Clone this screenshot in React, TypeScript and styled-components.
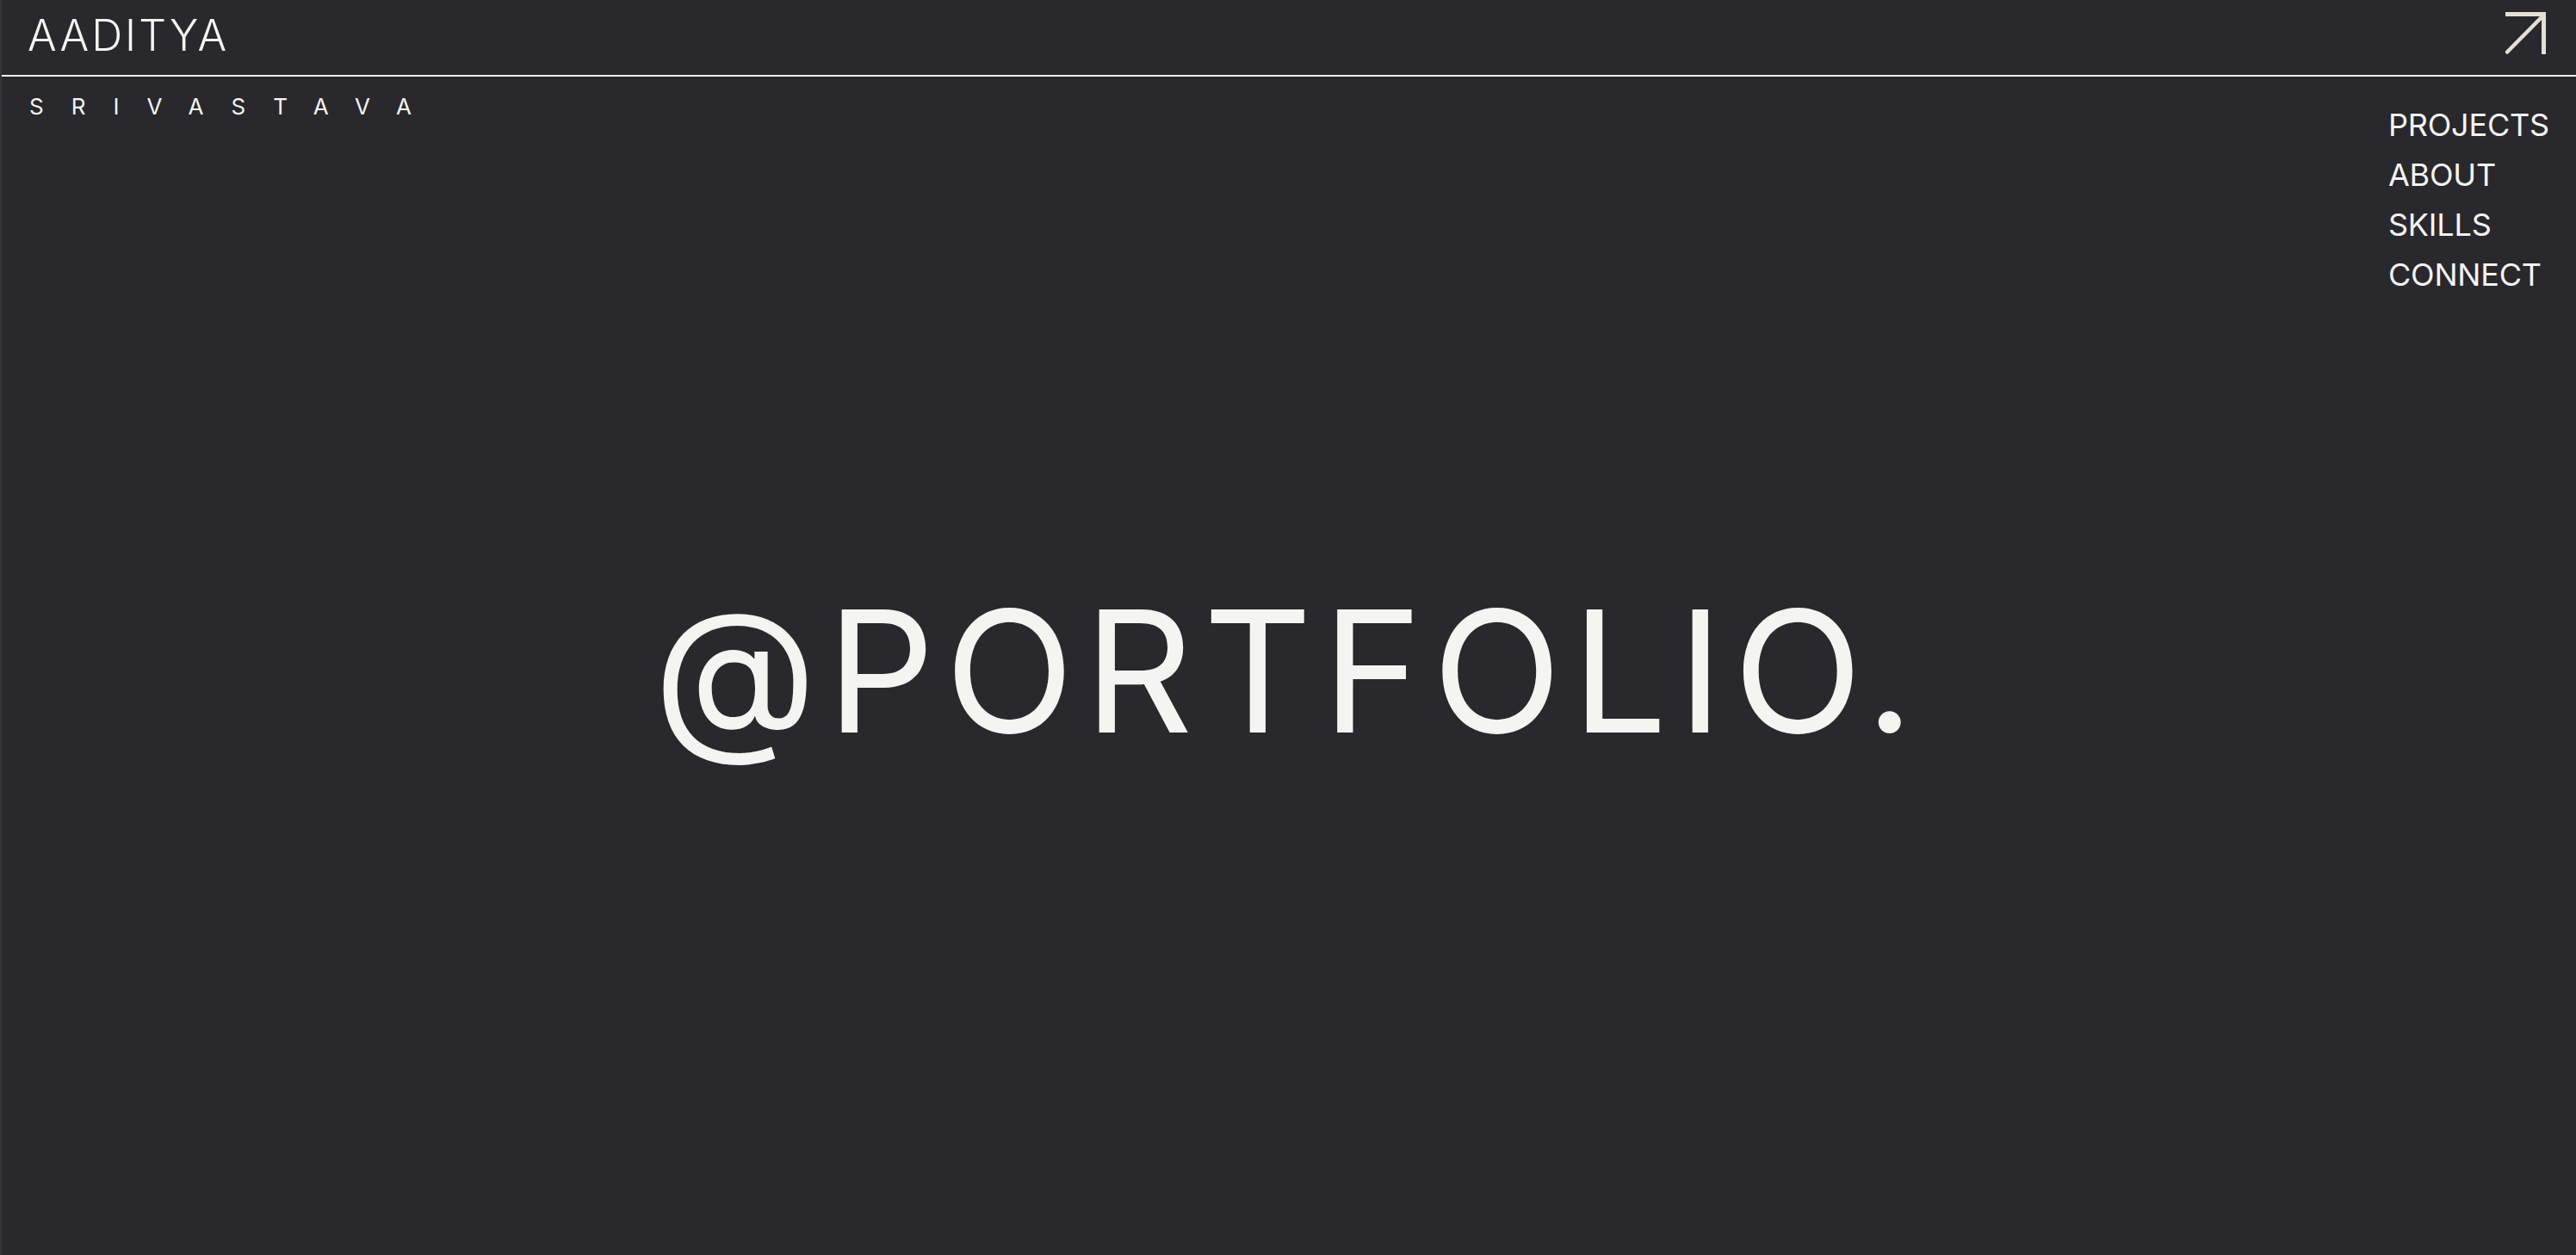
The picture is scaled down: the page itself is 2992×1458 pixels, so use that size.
import React from "react";
import styled, { createGlobalStyle } from "styled-components";

const Global = createGlobalStyle`
  html, body {
    margin: 0;
    padding: 0;
    background: #29282d;
  }
  body {
    font-family: Inter, "Noto Sans", "Liberation Sans", sans-serif;
    color: #f4f4f1;
  }
`;

const Page = styled.div`
  height: 1458px;
  display: grid;
  grid-template-rows: auto 1fr;
  background: #29282d;
  border-left: 2px solid #35343a;
  box-sizing: border-box;
  overflow: hidden;
`;

const Header = styled.header`
  height: 87px;
  display: flex;
  align-items: flex-start;
  justify-content: space-between;
  padding: 0 34px 0 30px;
  border-bottom: 2px solid #f4f4f4;
`;

const Logo = styled.div`
  margin-top: 11px;
  font-size: 50px;
  font-weight: 300;
  letter-spacing: 3px;
  line-height: normal;
  color: #f4f4f1;
`;

const ArrowLink = styled.a`
  margin-top: 13px;
  display: block;
  width: 48px;
  height: 50px;
  color: #e5e0d4;
`;

const Main = styled.main`
  display: grid;
  grid-template: 1fr / 1fr;
  & > * {
    grid-area: 1 / 1;
  }
`;

const Subtitle = styled.div`
  align-self: start;
  justify-self: start;
  margin: 19px 0 0 32px;
  font-size: 26px;
  font-weight: 400;
  letter-spacing: 32px;
  line-height: normal;
`;

const Nav = styled.nav`
  align-self: start;
  justify-self: end;
  margin: 27px 31px 0 0;
  display: flex;
  flex-direction: column;
  align-items: flex-start;
  z-index: 1;
`;

const NavLink = styled.a`
  font-size: 36px;
  line-height: 58px;
  font-weight: 400;
  color: #f4f4f1;
  text-decoration: none;
  letter-spacing: -0.005em;
`;

const Hero = styled.h1`
  align-self: center;
  justify-self: center;
  margin: 12px 0 0 0;
  font-size: 196px;
  font-weight: 400;
  line-height: normal;
  letter-spacing: 12px;
  color: #f4f4f1;
`;

function ArrowIcon() {
  return (
    <svg width="48" height="50" viewBox="0 0 48 50" fill="none">
      <path d="M0 3.5 H44.5 V50" stroke="currentColor" strokeWidth="5" />
      <path d="M2 47.5 L43 6" stroke="currentColor" strokeWidth="4.5" strokeLinecap="round" />
    </svg>
  );
}

export default function App() {
  return (
    <>
      <Global />
      <Page>
        <Header>
          <Logo>AADITYA</Logo>
          <ArrowLink href="#">
            <ArrowIcon />
          </ArrowLink>
        </Header>
        <Main>
          <Subtitle>SRIVASTAVA</Subtitle>
          <Nav>
            <NavLink href="#">PROJECTS</NavLink>
            <NavLink href="#">ABOUT</NavLink>
            <NavLink href="#">SKILLS</NavLink>
            <NavLink href="#">CONNECT</NavLink>
          </Nav>
          <Hero>@PORTFOLIO.</Hero>
        </Main>
      </Page>
    </>
  );
}
